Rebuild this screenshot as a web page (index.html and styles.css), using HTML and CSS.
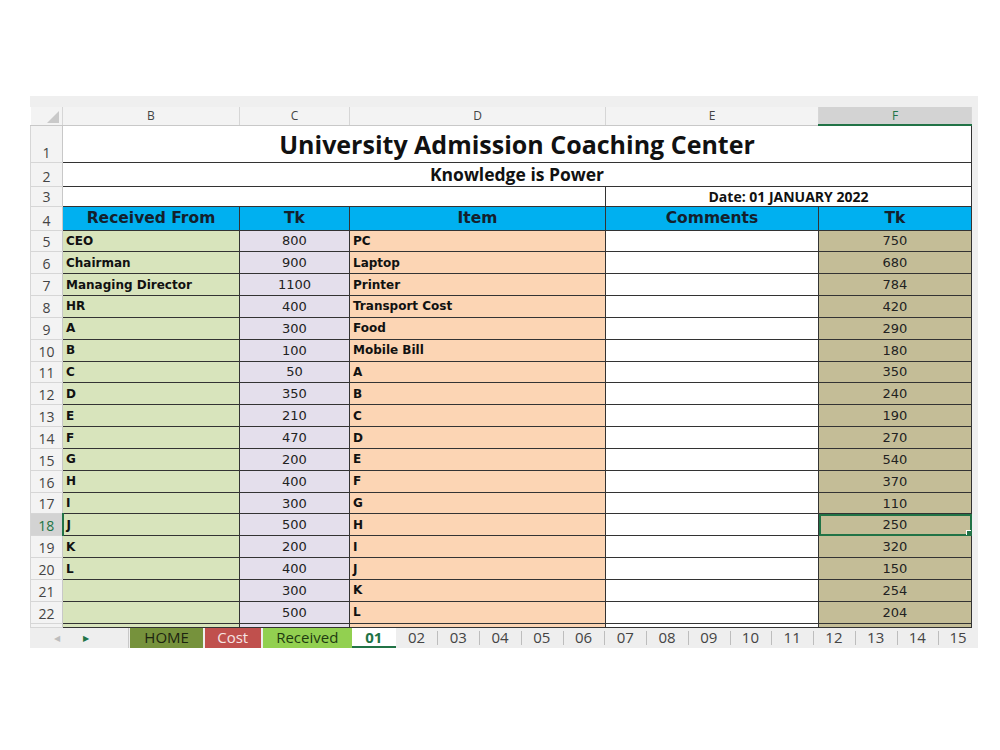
FILE: index.html
```html
<html>
<head>
	<title>University Admission Coaching Center</title>
	<link rel="stylesheet" href="styles.css">
</head>
<body>
	<div class="sheet">
		<div class="strip"></div>
		<table class="grid">
			<colgroup>
				<col class="c-rh"><col class="c-b"><col class="c-c"><col class="c-d"><col class="c-e"><col class="c-f">
			</colgroup>
			<tr class="r-head">
				<th class="corner"><span class="tri"></span></th>
				<th class="col">B</th>
				<th class="col">C</th>
				<th class="col">D</th>
				<th class="col">E</th>
				<th class="col sel">F</th>
			</tr>
			<tr class="r1">
				<td class="rh">1</td>
				<td colspan="5" class="title">University Admission Coaching Center</td>
			</tr>
			<tr class="r2">
				<td class="rh">2</td>
				<td colspan="5" class="sub">Knowledge is Power</td>
			</tr>
			<tr class="r3">
				<td class="rh">3</td>
				<td colspan="3" class="blank"></td>
				<td colspan="2" class="date">Date: 01 JANUARY 2022</td>
			</tr>
			<tr class="r4">
				<td class="rh">4</td>
				<td class="hd">Received From</td>
				<td class="hd">Tk</td>
				<td class="hd">Item</td>
				<td class="hd">Comments</td>
				<td class="hd">Tk</td>
			</tr>
			<tr class="row"><td class="rh">5</td><td class="b">CEO</td><td class="c">800</td><td class="d">PC</td><td class="e"></td><td class="f">750</td></tr>
			<tr class="row"><td class="rh">6</td><td class="b">Chairman</td><td class="c">900</td><td class="d">Laptop</td><td class="e"></td><td class="f">680</td></tr>
			<tr class="row"><td class="rh">7</td><td class="b">Managing Director</td><td class="c">1100</td><td class="d">Printer</td><td class="e"></td><td class="f">784</td></tr>
			<tr class="row"><td class="rh">8</td><td class="b">HR</td><td class="c">400</td><td class="d">Transport Cost</td><td class="e"></td><td class="f">420</td></tr>
			<tr class="row"><td class="rh">9</td><td class="b">A</td><td class="c">300</td><td class="d">Food</td><td class="e"></td><td class="f">290</td></tr>
			<tr class="row"><td class="rh">10</td><td class="b">B</td><td class="c">100</td><td class="d">Mobile Bill</td><td class="e"></td><td class="f">180</td></tr>
			<tr class="row"><td class="rh">11</td><td class="b">C</td><td class="c">50</td><td class="d">A</td><td class="e"></td><td class="f">350</td></tr>
			<tr class="row"><td class="rh">12</td><td class="b">D</td><td class="c">350</td><td class="d">B</td><td class="e"></td><td class="f">240</td></tr>
			<tr class="row"><td class="rh">13</td><td class="b">E</td><td class="c">210</td><td class="d">C</td><td class="e"></td><td class="f">190</td></tr>
			<tr class="row"><td class="rh">14</td><td class="b">F</td><td class="c">470</td><td class="d">D</td><td class="e"></td><td class="f">270</td></tr>
			<tr class="row"><td class="rh">15</td><td class="b">G</td><td class="c">200</td><td class="d">E</td><td class="e"></td><td class="f">540</td></tr>
			<tr class="row"><td class="rh">16</td><td class="b">H</td><td class="c">400</td><td class="d">F</td><td class="e"></td><td class="f">370</td></tr>
			<tr class="row"><td class="rh">17</td><td class="b">I</td><td class="c">300</td><td class="d">G</td><td class="e"></td><td class="f">110</td></tr>
			<tr class="row"><td class="rh rsel">18</td><td class="b">J</td><td class="c">500</td><td class="d">H</td><td class="e"></td><td class="f active">250<span class="handle"></span></td></tr>
			<tr class="row"><td class="rh">19</td><td class="b">K</td><td class="c">200</td><td class="d">I</td><td class="e"></td><td class="f">320</td></tr>
			<tr class="row"><td class="rh">20</td><td class="b">L</td><td class="c">400</td><td class="d">J</td><td class="e"></td><td class="f">150</td></tr>
			<tr class="row"><td class="rh">21</td><td class="b"></td><td class="c">300</td><td class="d">K</td><td class="e"></td><td class="f">254</td></tr>
			<tr class="row"><td class="rh">22</td><td class="b"></td><td class="c">500</td><td class="d">L</td><td class="e"></td><td class="f">204</td></tr>
			<tr class="r-cut"><td class="rh"></td><td class="b"></td><td class="c"></td><td class="d"></td><td class="e"></td><td class="f"></td></tr>
		</table>
		<div class="tabs">
			<div class="nav">
				<span class="arr prev">&#9664;</span>
				<span class="arr next">&#9654;</span>
			</div>
			<div class="tab home">HOME</div>
			<div class="tab cost">Cost</div>
			<div class="tab recv">Received</div>
			<div class="tab cur">01</div>
			<div class="tab num">02</div>
			<div class="tab num">03</div>
			<div class="tab num">04</div>
			<div class="tab num">05</div>
			<div class="tab num">06</div>
			<div class="tab num">07</div>
			<div class="tab num">08</div>
			<div class="tab num">09</div>
			<div class="tab num">10</div>
			<div class="tab num">11</div>
			<div class="tab num">12</div>
			<div class="tab num">13</div>
			<div class="tab num">14</div>
			<div class="tab num last">15</div>
		</div>
	</div>
</body>
</html>
```
FILE: styles.css
```css
* {
	box-sizing: border-box;
}

body{
	margin: 0;
	background: #ffffff;
	font-family: "DejaVu Sans", Verdana, sans-serif;
}

.sheet{
	width: 948px;
	margin: 96px 0 0 30px;
	background: #efefef;
	overflow: hidden;
}

.strip{
	height: 11px;
	background: #efefef;
}

table.grid{
	border-collapse: collapse;
	table-layout: fixed;
	width: 941px;
	background: #ffffff;
}

col.c-rh{ width: 32px; }
col.c-b{ width: 177px; }
col.c-c{ width: 110px; }
col.c-d{ width: 256px; }
col.c-e{ width: 213px; }
col.c-f{ width: 153px; }

td, th{
	padding: 0;
	overflow: hidden;
	white-space: nowrap;
}

/* column letters */
tr.r-head th{
	height: 17px;
	background: #f3f3f3;
	border-right: 1px solid #d6d6d6;
	border-bottom: 1px solid #c8c8c8;
	font-family: "Open Sans", sans-serif;
	font-weight: normal;
	font-size: 12px;
	color: #444;
}

th.corner{
	position: relative;
}

.tri{
	position: absolute;
	right: 3px;
	bottom: 2px;
	width: 0;
	height: 0;
	border-left: 12px solid transparent;
	border-bottom: 12px solid #c9c9c9;
}

tr.r-head th.sel{
	background: #d3d3d3;
	color: #217346;
	border-bottom: 2px solid #217346;
}

/* row numbers */
td.rh{
	background: #f3f3f3;
	border: 1px solid #d6d6d6;
	border-right: 1px solid #c8c8c8;
	font-family: "Open Sans", sans-serif;
	font-size: 14px;
	color: #444;
	text-align: center;
	vertical-align: bottom;
	padding-bottom: 0;
	line-height: 19px;
}

td.rsel{
	background: #d3d3d3;
	color: #217346;
	border-right: 2px solid #217346;
}

tr.r1 td{ height: 37px; }
tr.r2 td{ height: 24px; }
tr.r3 td{ height: 20px; }
tr.r4 td{ height: 24px; }
tr.row td{ height: 21.85px; }
tr.r-cut td{ height: 4px; line-height: 0; }

td.title, td.sub, td.blank, td.date, td.hd, td.b, td.c, td.d, td.e, td.f{
	border: 1px solid #333;
}

td.title{
	font-family: "Open Sans", sans-serif;
	font-weight: bold;
	font-size: 25px;
	text-align: center;
	color: #111;
	line-height: 30px;
}

td.sub{
	font-family: "Open Sans", sans-serif;
	font-weight: bold;
	font-size: 17.5px;
	text-align: center;
	color: #111;
	line-height: 20px;
}

td.date{
	font-family: "Open Sans", sans-serif;
	font-weight: bold;
	font-size: 14px;
	text-align: center;
	color: #111;
	vertical-align: bottom;
	line-height: 18px;
}

td.hd{
	background: #00b0f0;
	font-weight: bold;
	font-size: 15.5px;
	text-align: center;
	color: #14202c;
}

td.b, td.d{
	font-weight: bold;
	font-size: 12px;
	color: #111;
	padding-left: 3px;
}

td.b{ background: #d8e4bc; }
td.c{ background: #e4dfec; }
td.d{ background: #fcd5b4; }
td.e{ background: #ffffff; }
td.f{ background: #c4bd97; }

td.c, td.f{
	font-size: 13px;
	text-align: center;
	color: #222;
}

td.active{
	position: relative;
	outline: 2px solid #217346;
	outline-offset: -2px;
}

.handle{
	position: absolute;
	right: -1px;
	bottom: -1px;
	width: 6px;
	height: 6px;
	background: #217346;
	border: 1px solid #fff;
}

/* sheet tabs */
.tabs{
	display: flex;
	height: 20px;
	background: #eeeeee;
	font-family: "Open Sans", sans-serif;
	font-size: 15px;
	line-height: 19px;
	color: #444;
}

.nav{
	width: 100px;
	display: flex;
	align-items: center;
	border-right: 1px solid #c8c8c8;
	font-size: 8px;
}

.arr{
	display: inline-block;
}

.prev{
	color: #bdbdbd;
	margin-left: 24px;
}

.next{
	color: #217346;
	margin-left: 23px;
}

.tab{
	text-align: center;
	white-space: nowrap;
}

.home{
	width: 73px;
	margin-left: 1px;
	background: #76923c;
	color: #1d2410;
}

.cost{
	width: 56px;
	margin-left: 2px;
	background: #c0504d;
	color: #f6e4e3;
}

.recv{
	width: 90px;
	margin-left: 2px;
	background: #92d050;
	color: #1f3b10;
}

.cur{
	width: 44px;
	background: #ffffff;
	color: #217346;
	font-weight: bold;
	border-bottom: 2px solid #217346;
	line-height: 18px;
}

.num{
	width: 42px;
	position: relative;
}

.num::before{
	content: "";
	position: absolute;
	left: 0;
	top: 3px;
	height: 14px;
	border-left: 1px solid #bdbdbd;
}

.cur + .num::before{
	display: none;
}

.last{
	width: 40px;
}
```
